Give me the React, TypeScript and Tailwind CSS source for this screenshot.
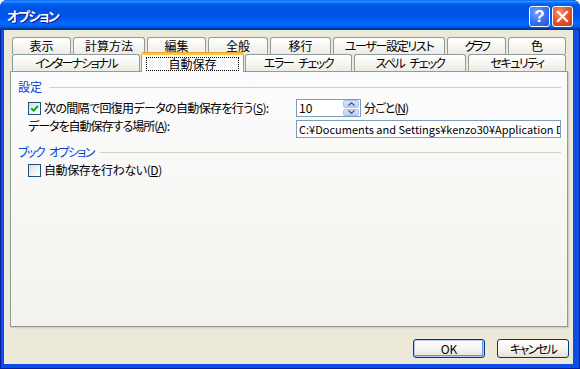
import React from "react";

const tabBg =
  "bg-[linear-gradient(180deg,#ffffff_0%,#f8f7f3_45%,#ecebe6_100%)]";

function BackTab({
  label,
  w,
  t = "",
}: {
  label: React.ReactNode;
  w: string;
  t?: string;
}) {
  return (
    <div
      className={`${w} h-[17px] shrink-0 flex items-center justify-center rounded-t-[3px] border border-b-0 border-[#919b9c] ${tabBg} text-[12px] leading-[14px] text-black`}
    >
      <span className={t}>{label}</span>
    </div>
  );
}

function Check({ checked }: { checked: boolean }) {
  return (
    <div className="w-[13px] h-[13px] shrink-0 border border-[#1c5180] bg-[linear-gradient(135deg,#dcdcd7_0%,#f4f4f0_60%,#ffffff_100%)] flex items-center justify-center">
      {checked && (
        <svg width="9" height="9" viewBox="0 0 9 9">
          <path
            d="M1.2 4.2 L3.6 6.6 L7.9 2"
            stroke="#21a121"
            strokeWidth="2"
            fill="none"
          />
        </svg>
      )}
    </div>
  );
}

function U({ c }: { c: string }) {
  return <span className="underline underline-offset-[1px]">{c}</span>;
}

export default function App() {
  return (
    <div className="w-[580px] h-[369px] overflow-hidden flex flex-col bg-[#001ea0] rounded-t-[7px] [font-family:'Noto_Sans_CJK_JP',sans-serif] [font-feature-settings:'palt'] text-black">
      {/* title bar */}
      <div className="h-[30px] shrink-0 flex items-center pl-[7px] pr-[7px] bg-[linear-gradient(180deg,#0058ee_0%,#3593ff_4%,#288eff_6%,#127dff_8%,#036ffc_10%,#0262ee_14%,#0057e5_20%,#0054e3_24%,#0055eb_56%,#005bf5_66%,#026afe_76%,#0062ef_86%,#0052d6_92%,#0040ab_94%,#003092_100%)]">
        <div className="flex-1 text-white font-bold text-[13px] leading-[16px] tracking-[-1.5px] [text-shadow:1px_1px_#0f1089] mt-[1px]">
          オプション
        </div>
        <div className="flex gap-[2px] mt-[2px]">
          <div className="w-[21px] h-[21px] rounded-[3px] border border-white bg-[radial-gradient(circle_at_35%_30%,#7aa6ff_0%,#3f77f0_45%,#1c4fd8_100%)] flex items-center justify-center">
            <span className="text-white font-bold text-[17px] leading-[17px] [font-family:'Liberation_Sans',sans-serif]">
              ?
            </span>
          </div>
          <div className="w-[21px] h-[21px] rounded-[3px] border border-white bg-[radial-gradient(circle_at_35%_30%,#f29a7f_0%,#e2582f_45%,#c7391a_100%)] flex items-center justify-center">
            <svg width="13" height="13" viewBox="0 0 13 13">
              <path
                d="M2 2 L11 11 M11 2 L2 11"
                stroke="#ffffff"
                strokeWidth="2.2"
                strokeLinecap="square"
              />
            </svg>
          </div>
        </div>
      </div>

      {/* body */}
      <div className="flex-1 mx-[1px] mb-[1px] border-l-[3px] border-r-[6px] border-b-[4px] border-[#0b4de6] bg-[#ece9d8] flex flex-col">
        <div className="ml-[6px] mt-[7px] w-[558px] flex flex-col">
          {/* tab row 1 */}
          <div className="flex gap-[2px] pl-[2px]">
            <BackTab label="表示" w="w-[59px]" />
            <BackTab label="計算方法" w="w-[72px]" />
            <BackTab label="編集" w="w-[59px]" />
            <BackTab label="全般" w="w-[60px]" />
            <BackTab label="移行" w="w-[61px]" />
            <BackTab label="ユーザー設定リスト" w="w-[112px]" t="tracking-[-1.3px]" />
            <BackTab label="グラフ" w="w-[59px]" t="tracking-[-2.5px]" />
            <BackTab label="色" w="w-[58px]" />
          </div>
          {/* tab row 2 */}
          <div className="flex items-end h-[17px] pl-[2px]">
            <BackTab label="インターナショナル" w="w-[128px]" t="tracking-[-1.8px]" />
            <div className="relative top-[1px] z-10 ml-[1px] w-[103px] h-[20px] shrink-0 flex flex-col">
              <div className="h-[3px] rounded-t-[3px] bg-[linear-gradient(180deg,#e68b2c_0%,#ffc73c_45%,#ffc73c_100%)]" />
              <div className="flex-1 border-x border-[#919b9c] bg-[#fcfcfe] flex items-center justify-center">
                <div className="w-[93px] h-[14px] border border-dotted border-black flex items-center justify-center text-[12px] leading-[14px]">
                  自動保存
                </div>
              </div>
            </div>
            <div className="ml-[1px]">
              <BackTab
                label={
                  <>
                    エラー<span className="inline-block w-[5px]"> </span>チェック
                  </>
                }
                w="w-[107px]"
                t="tracking-[-1.5px]"
              />
            </div>
            <div className="ml-[2px]">
              <BackTab
                label={
                  <>
                    スペル<span className="inline-block w-[5px]"> </span>チェック
                  </>
                }
                w="w-[112px]"
                t="tracking-[-1.5px]"
              />
            </div>
            <div className="ml-[2px]">
              <BackTab label="セキュリティ" w="w-[98px]" t="tracking-[-1.5px]" />
            </div>
          </div>

          {/* panel */}
          <div className="h-[256px] border border-[#919b9c] bg-[linear-gradient(180deg,#fcfcfe_0%,#f8f7f4_50%,#f3f2ec_100%)] shadow-[1px_1px_0_#d0cec3,2px_2px_0_#e3e0d3] pl-[7px] pr-[6px] pt-[8px] text-[12px] leading-[14px]">
            {/* section 1 header */}
            <div className="flex items-center gap-[7px] h-[14px]">
              <span className="text-[#0046d5]">設定</span>
              <div className="flex-1 h-px bg-[#d0d0bf]" />
            </div>
            {/* row 1 */}
            <div className="flex items-center h-[18px] mt-[5px] pl-[10px]">
              <div className="w-[268px] flex items-center gap-[3px]">
                <Check checked />
                <span className="tracking-[-0.65px]">
                  次の間隔で回復用データの自動保存を行う(<U c="S" />):
                </span>
              </div>
              <div className="w-[65px] h-[18px] border border-[#7f9db9] bg-white flex items-center pl-[2px] pr-px">
                <span className="flex-1 text-[12px]">10</span>
                <div className="w-[16px] h-[16px] flex flex-col gap-px">
                  <div className="flex-1 rounded-[2px] bg-[linear-gradient(180deg,#dbe6fd,#b9cdf7)] border border-[#aec3f3] flex items-center justify-center">
                    <svg width="7" height="4" viewBox="0 0 7 4">
                      <path d="M0.5 3.5 L3.5 0.8 L6.5 3.5" stroke="#4d6185" strokeWidth="1.4" fill="none" />
                    </svg>
                  </div>
                  <div className="flex-1 rounded-[2px] bg-[linear-gradient(180deg,#dbe6fd,#b9cdf7)] border border-[#aec3f3] flex items-center justify-center">
                    <svg width="7" height="4" viewBox="0 0 7 4">
                      <path d="M0.5 0.5 L3.5 3.2 L6.5 0.5" stroke="#4d6185" strokeWidth="1.4" fill="none" />
                    </svg>
                  </div>
                </div>
              </div>
              <span className="ml-[3px] tracking-[-1px]">
                分ごと(<U c="N" />)
              </span>
            </div>
            {/* row 2 */}
            <div className="flex items-start h-[18px] mt-[3px] pl-[10px]">
              <div className="w-[268px] mt-[-1px] tracking-[-1px]">
                データを自動保存する場所(<U c="A" />):
              </div>
              <div className="flex-1 h-[18px] border border-[#7f9db9] bg-white pl-[2px] overflow-hidden whitespace-nowrap text-[11px] leading-[16px]">
                C:¥Documents and Settings¥kenzo30¥Application Data¥Microsoft¥Excel
              </div>
            </div>
            {/* section 2 header */}
            <div className="flex items-center gap-[6px] h-[14px] mt-[7px]">
              <span className="text-[#0046d5] tracking-[-1.6px]">
                ブック<span className="inline-block w-[5px]"> </span>オプション
              </span>
              <div className="flex-1 h-px bg-[#d0d0bf]" />
            </div>
            {/* row 3 */}
            <div className="flex items-center h-[14px] mt-[4px] pl-[10px] gap-[3px]">
              <Check checked={false} />
              <span className="tracking-[-0.4px]">
                自動保存を行わない(<U c="D" />)
              </span>
            </div>
          </div>
        </div>

        {/* buttons */}
        <div className="flex justify-end gap-[12px] mt-[12px] mr-[4px] text-[12px] leading-[14px]">
          <div className="w-[72px] h-[19px] rounded-[3px] border border-[#003c74] bg-[linear-gradient(180deg,#ffffff_0%,#f4f3ee_60%,#e3e0d6_100%)] shadow-[inset_0_0_0_1px_#b4c9f3,inset_-1px_-1px_0_1px_#6d8ee8] flex items-center justify-center">
            OK
          </div>
          <div className="w-[72px] h-[19px] rounded-[3px] border border-[#003c74] bg-[linear-gradient(180deg,#ffffff_0%,#f4f3ee_60%,#e3e0d6_100%)] flex items-center justify-center">
            <span className="tracking-[-1.6px]">キャンセル</span>
          </div>
        </div>
      </div>
    </div>
  );
}
